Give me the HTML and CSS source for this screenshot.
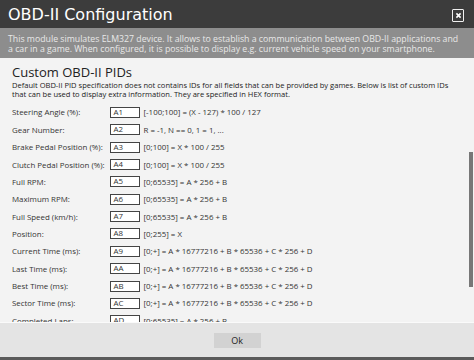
FILE: index.html
```html
<!DOCTYPE html>
<html>
<head>
<meta charset="utf-8">
<link rel="stylesheet" href="styles.css">
</head>
<body>
<div class="dialog">
  <div class="titlebar">
    <div class="title">OBD-II Configuration</div>
    <div class="close"><svg viewBox="0 0 10 10" width="7" height="7"><path d="M2 2 L8 8 M8 2 L2 8" stroke="#fff" stroke-width="2.2"/></svg></div>
  </div>
  <div class="desc">This module simulates ELM327 device. It allows to establish a communication between OBD-II applications and<br>a car in a game. When configured, it is possible to display e.g. current vehicle speed on your smartphone.</div>
  <div class="content">
    <h2 class="heading">Custom OBD-II PIDs</h2>
    <p class="intro">Default OBD-II PID specification does not contains IDs for all fields that can be provided by games. Below is list of custom IDs<br>that can be used to display extra information. They are specified in HEX format.</p>
    <div class="rows">
      <div class="row"><span class="label">Steering Angle (%):</span><span class="box">A1</span><span class="formula">[-100;100] = (X - 127) * 100 / 127</span></div>
      <div class="row"><span class="label">Gear Number:</span><span class="box">A2</span><span class="formula">R = -1, N == 0, 1 = 1, ...</span></div>
      <div class="row"><span class="label">Brake Pedal Position (%):</span><span class="box">A3</span><span class="formula">[0;100] = X * 100 / 255</span></div>
      <div class="row"><span class="label">Clutch Pedal Position (%):</span><span class="box">A4</span><span class="formula">[0;100] = X * 100 / 255</span></div>
      <div class="row"><span class="label">Full RPM:</span><span class="box">A5</span><span class="formula">[0;65535] = A * 256 + B</span></div>
      <div class="row"><span class="label">Maximum RPM:</span><span class="box">A6</span><span class="formula">[0;65535] = A * 256 + B</span></div>
      <div class="row"><span class="label">Full Speed (km/h):</span><span class="box">A7</span><span class="formula">[0;65535] = A * 256 + B</span></div>
      <div class="row"><span class="label">Position:</span><span class="box">A8</span><span class="formula">[0;255] = X</span></div>
      <div class="row"><span class="label">Current Time (ms):</span><span class="box">A9</span><span class="formula">[0;+] = A * 16777216 + B * 65536 + C * 256 + D</span></div>
      <div class="row"><span class="label">Last Time (ms):</span><span class="box">AA</span><span class="formula">[0;+] = A * 16777216 + B * 65536 + C * 256 + D</span></div>
      <div class="row"><span class="label">Best Time (ms):</span><span class="box">AB</span><span class="formula">[0;+] = A * 16777216 + B * 65536 + C * 256 + D</span></div>
      <div class="row"><span class="label">Sector Time (ms):</span><span class="box">AC</span><span class="formula">[0;+] = A * 16777216 + B * 65536 + C * 256 + D</span></div>
      <div class="row"><span class="label">Completed Laps:</span><span class="box">AD</span><span class="formula">[0;65535] = A * 256 + B</span></div>
    </div>
    <div class="scrollthumb"></div>
  </div>
  <div class="footer"><button class="ok">Ok</button></div>
</div>
</body>
</html>
```

FILE: styles.css
```css
html, body { margin: 0; padding: 0; }
body { width: 474px; height: 360px; overflow: hidden; background: #f3f3f3; font-family: "Open Sans", sans-serif; }
.dialog { display: flex; flex-direction: column; height: 360px; box-sizing: border-box; border-bottom: 3px solid #5a5a5a; }
.titlebar { height: 28px; flex: none; box-sizing: border-box; background: #3c3c3c; display: flex; align-items: flex-start; padding: 6px 10px 0 8px; }
.title { font-family: "DejaVu Sans", sans-serif; font-size: 16px; line-height: 18px; color: #fff; flex: 1; }
.close { width: 12px; height: 13px; box-sizing: border-box; border: 1.5px solid #f0f0f0; border-radius: 1px; display: flex; align-items: center; justify-content: center; margin-top: 3px; }
.desc { height: 30px; flex: none; box-sizing: border-box; background: #8d8d8d; color: #e8e8e8; font-size: 8.75px; line-height: 10.5px; padding: 5.5px 8px 0 8px; white-space: nowrap; overflow: hidden; }
.content { flex: 1; position: relative; overflow: hidden; padding: 0 12px; background: #f3f3f3; }
.heading { margin: 6px 0 0 0; font-size: 13px; font-weight: normal; color: #222; line-height: 16px; }
.intro { margin: 1.25px 0 0 0; font-size: 7.55px; line-height: 8.5px; color: #222; white-space: nowrap; }
.rows { margin-top: 5.5px; }
.row { display: flex; align-items: center; height: 17.37px; font-size: 7.9px; color: #333; white-space: nowrap; }
.label { width: 97.5px; flex: none; }
.box { width: 30px; height: 11px; box-sizing: border-box; border: 1px solid #444; background: #fff; padding-left: 3px; line-height: 9px; flex: none; }
.formula { margin-left: 4px; }
.scrollthumb { position: absolute; right: 1px; top: 94px; width: 4px; height: 135px; background: #777; }
.footer { height: 35px; flex: none; box-sizing: border-box; background: #e4e4e4; border-top: 1px solid #fafafa; display: flex; justify-content: center; align-items: center; }
.ok { width: 47px; height: 15px; border: none; background: #d2d2d2; font-family: "Open Sans", sans-serif; font-size: 9px; color: #222; padding: 0; }
```
